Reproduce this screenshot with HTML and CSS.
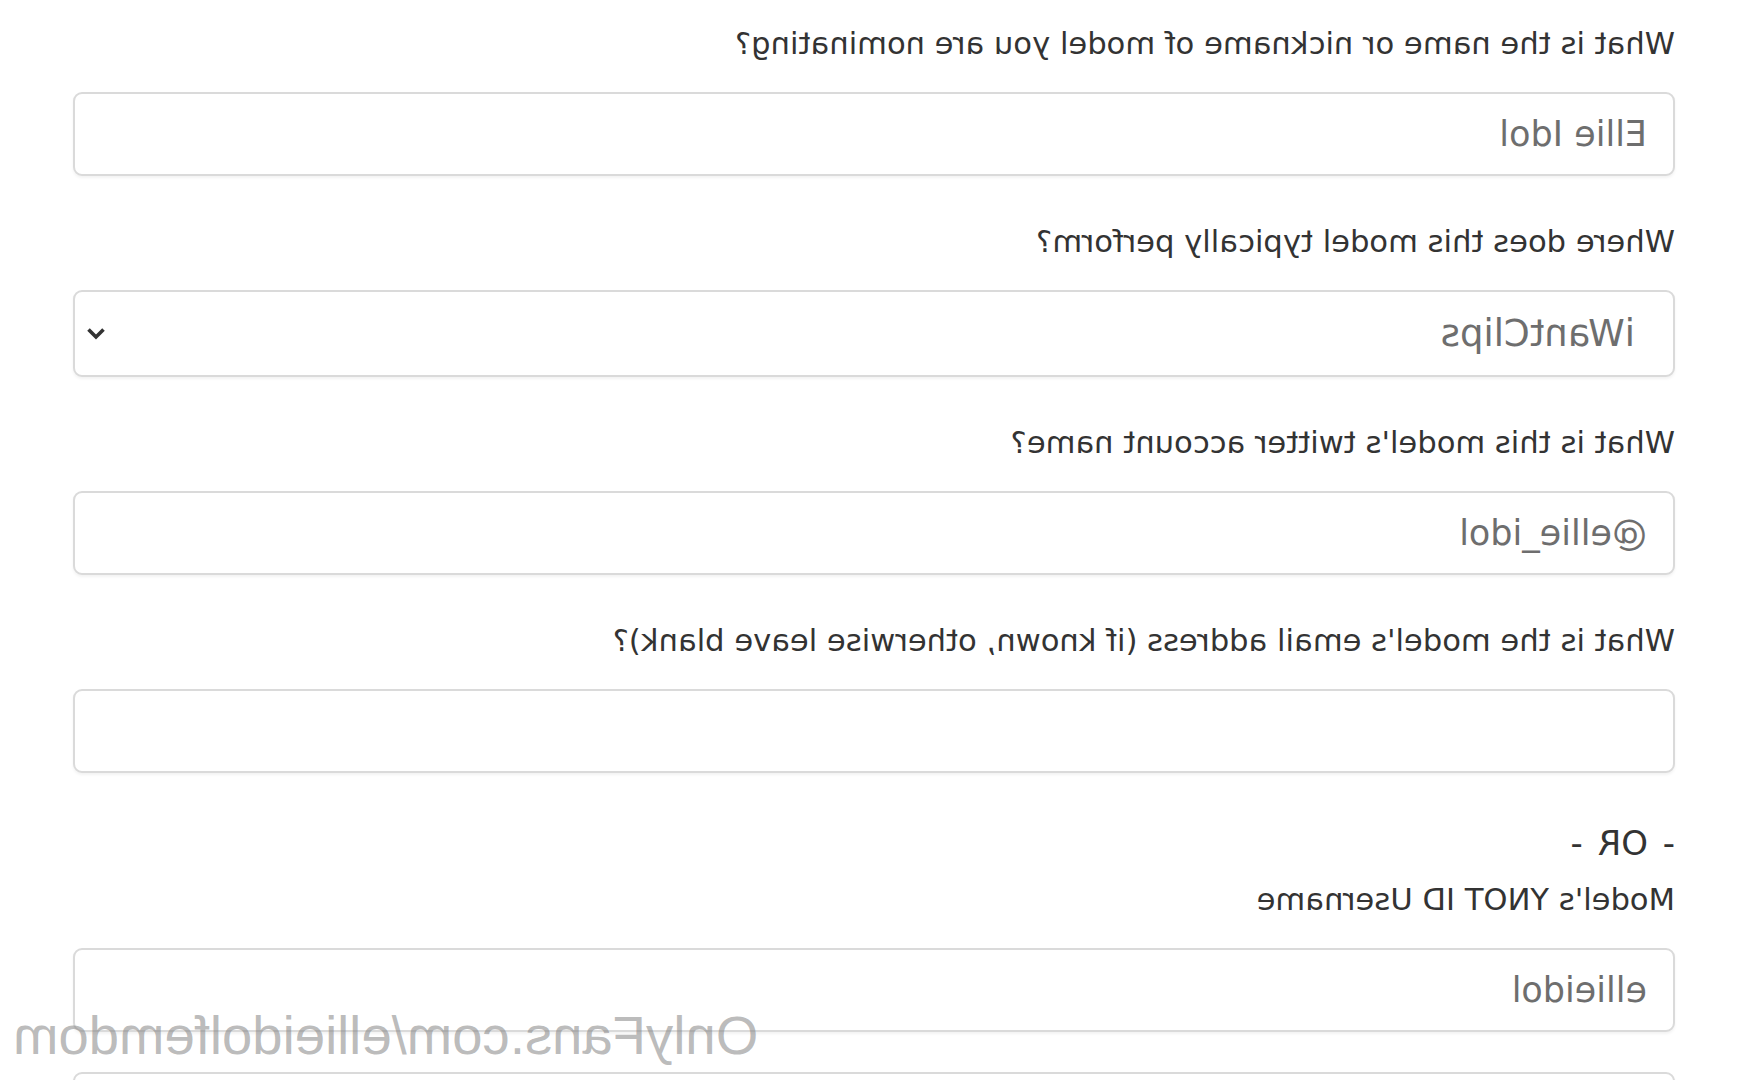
FILE: index.html
```html
<!DOCTYPE html>
<html lang="en">
<head>
  <meta charset="UTF-8" />
  <title>Model Nomination</title>
  <link rel="stylesheet" href="styles.css">
</head>
<body>
  <div class="page">
    <form class="nominate-form">
      <div class="field">
        <label for="modelName">What is the name or nickname of model you are nominating?</label>
        <input id="modelName" type="text" value="Ellie Idol" />
      </div>

      <div class="field">
        <label for="platform">Where does this model typically perform?</label>
        <div class="select-wrap">
          <select id="platform">
            <option>iWantClips</option>
            <option>OnlyFans</option>
            <option>Clips4Sale</option>
            <option>ManyVids</option>
          </select>
          <svg class="chevron" width="20" height="13" viewBox="0 0 20 13">
            <path d="M2.5 2.5 L10 10 L17.5 2.5" fill="none" stroke="#333" stroke-width="3.6" />
          </svg>
        </div>
      </div>

      <div class="field">
        <label for="twitter">What is this model's twitter account name?</label>
        <input id="twitter" type="text" value="@ellie_idol" />
      </div>

      <div class="field">
        <label for="email">What is the model's email address (if known, otherwise leave blank)?</label>
        <input id="email" type="email" value="" />
      </div>

      <div class="or">- OR -</div>

      <div class="field">
        <label for="ynot">Model's YNOT ID Username</label>
        <input id="ynot" type="text" value="ellieidol" />
      </div>

      <div class="field last">
        <input type="text" value="" />
      </div>
    </form>

    <div class="watermark">OnlyFans.com/ellieidolfemdom</div>
  </div>
</body>
</html>
```

FILE: styles.css
```css
html, body {
  margin: 0;
  padding: 0;
  background: #fff;
}

body {
  font-family: "DejaVu Sans", Arial, sans-serif;
  color: #333;
}

/* the whole page is shown mirrored */
.page {
  position: relative;
  width: 1737px;
  height: 1080px;
  overflow: hidden;
  transform: scaleX(-1);
}

.nominate-form {
  margin-left: 62px;
  width: 1602px;
  padding-top: 24px;
}

.field {
  margin-bottom: 46px;
}

.field label {
  display: block;
  font-size: 30.6px;
  line-height: 40px;
  margin-bottom: 28px;
  color: #333;
}

.field input,
.field select {
  box-sizing: border-box;
  width: 100%;
  height: 84px;
  padding: 0 26px;
  font-family: "DejaVu Sans", Arial, sans-serif;
  font-size: 35px;
  color: #6e6e6e;
  background: #fff;
  border: 2px solid #dadada;
  border-radius: 9px;
  box-shadow: 0 2px 3px rgba(0, 0, 0, 0.05);
  outline: none;
}

.select-wrap {
  position: relative;
}

.field select {
  height: 87px;
  padding-left: 38px;
  font-size: 37px;
  appearance: none;
  -webkit-appearance: none;
}

.chevron {
  position: absolute;
  right: 13px;
  top: 37px;
}

.or {
  font-size: 34px;
  line-height: 40px;
  word-spacing: 4px;
  padding-top: 4px;
  margin-bottom: 17px;
  color: #333;
}

.field.last {
  margin-top: -6px;
}

.watermark {
  position: absolute;
  right: 13px;
  top: 1006px;
  font-family: "Liberation Sans", Arial, sans-serif;
  font-size: 54.5px;
  line-height: 60px;
  color: rgba(130, 130, 130, 0.55);
  white-space: nowrap;
}
```
